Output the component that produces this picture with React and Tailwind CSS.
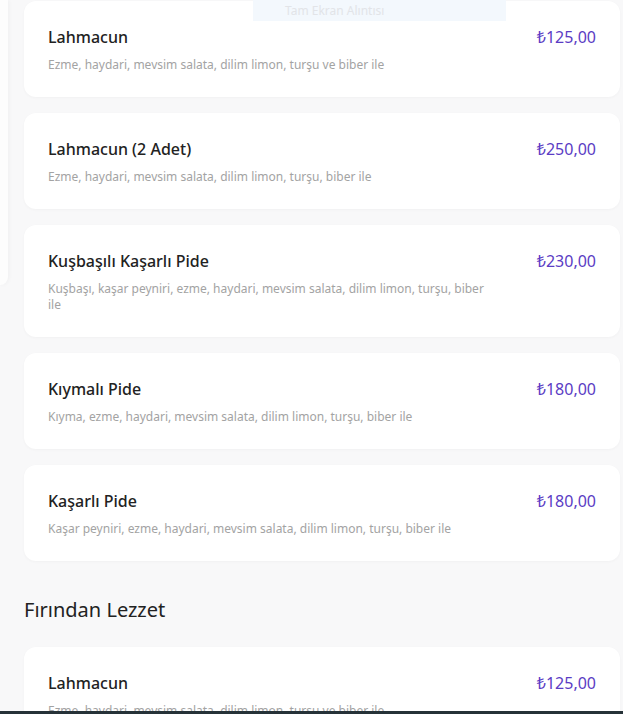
const items = [
  { name: 'Lahmacun', desc: 'Ezme, haydari, mevsim salata, dilim limon, turşu ve biber ile', price: '₺125,00' },
  { name: 'Lahmacun (2 Adet)', desc: 'Ezme, haydari, mevsim salata, dilim limon, turşu, biber ile', price: '₺250,00' },
  { name: 'Kuşbaşılı Kaşarlı Pide', desc: 'Kuşbaşı, kaşar peyniri, ezme, haydari, mevsim salata, dilim limon, turşu, biber ile', price: '₺230,00' },
  { name: 'Kıymalı Pide', desc: 'Kıyma, ezme, haydari, mevsim salata, dilim limon, turşu, biber ile', price: '₺180,00' },
  { name: 'Kaşarlı Pide', desc: 'Kaşar peyniri, ezme, haydari, mevsim salata, dilim limon, turşu, biber ile', price: '₺180,00' },
];

const ovenItems = [
  { name: 'Lahmacun', desc: 'Ezme, haydari, mevsim salata, dilim limon, turşu ve biber ile', price: '₺125,00' },
];

function MenuCard({ item }) {
  return (
    <div className="flex justify-between rounded-xl bg-white px-6 pt-6 pb-6 shadow-[0_1px_3px_rgba(0,0,0,0.03)]">
      <div className="max-w-[80%]">
        <h3 className="text-base leading-6 font-medium text-[#222]">{item.name}</h3>
        <p className="mt-2 text-xs leading-4 text-[#a3a3a3]">{item.desc}</p>
      </div>
      <span className="text-base leading-6 font-normal text-[#5b3cc4] whitespace-nowrap">{item.price}</span>
    </div>
  );
}

export default function App() {
  return (
    <div
      className="relative h-[714px] w-[623px] overflow-hidden bg-[#f8f8f9]"
      style={{ fontFamily: '"Noto Sans", "Open Sans", sans-serif' }}
    >
      <div className="flex gap-4">
        {/* sidebar edge */}
        <div className="w-2 shrink-0">
          <div className="h-[285px] rounded-br-lg bg-[#fdfdfd] shadow-[1px_0_4px_rgba(0,0,0,0.04)]"></div>
        </div>

        <div className="flex-1 pt-px pr-[3px]">
          <div className="flex flex-col gap-4">
            {items.map((item, i) => (
              <MenuCard key={i} item={item} />
            ))}
          </div>

          <h2 className="mt-[35px] mb-[23px] text-xl leading-7 text-[#222]">Fırından Lezzet</h2>

          <div className="flex flex-col gap-4">
            {ovenItems.map((item, i) => (
              <MenuCard key={i} item={item} />
            ))}
          </div>
        </div>
      </div>

      {/* snipping overlay */}
      <div className="absolute top-0 left-[253px] h-[21px] w-[253px] bg-[#f3f8fd] pl-8 text-xs leading-[21px] text-[#e2e4e8]">
        Tam Ekran Alıntısı
      </div>

      {/* bottom bar */}
      <div className="absolute bottom-0 left-0 h-[3px] w-full bg-[#263238]"></div>
    </div>
  );
}
